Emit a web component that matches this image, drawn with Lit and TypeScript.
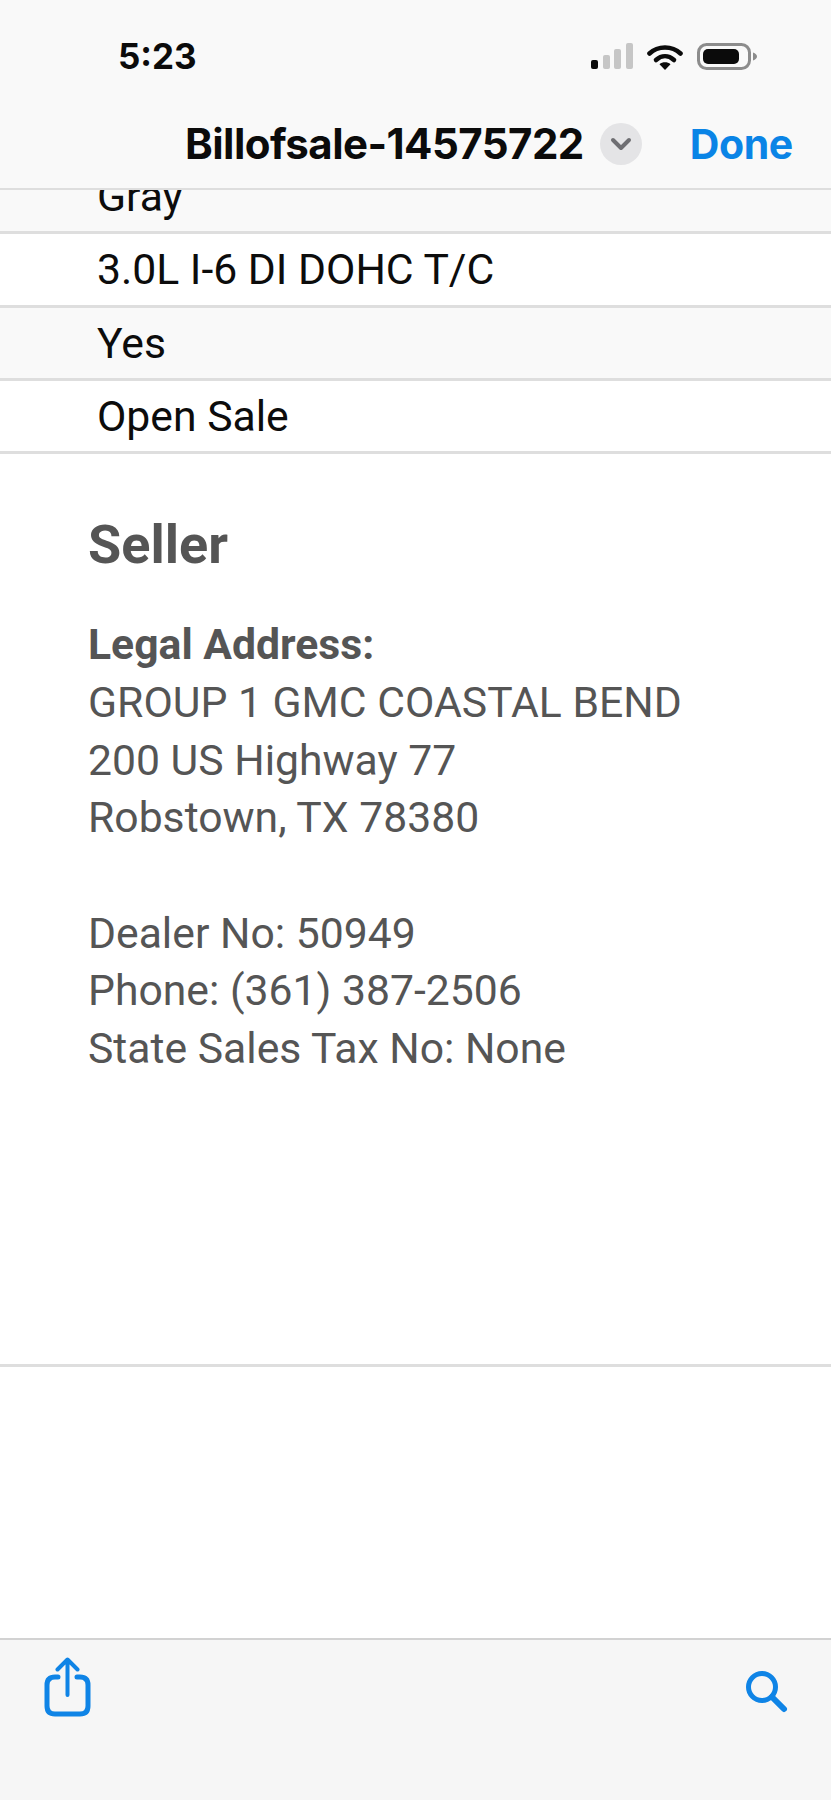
import { css, html, LitElement } from "lit";
import { customElement } from "lit/decorators.js";

const ROWS = ["Gray", "3.0L I-6 DI DOHC T/C", "Yes", "Open Sale"];

@customElement("app-root")
export class AppRoot extends LitElement {
  static styles = css`
    :host {
      display: block;
      width: 831px;
      height: 1800px;
      background: #fff;
      font-family: Roboto, "Liberation Sans", sans-serif;
    }

    .page {
      display: flex;
      flex-direction: column;
      height: 100%;
    }

    .head {
      flex: none;
      height: 190px;
      box-sizing: border-box;
      background: #f9f9f9;
      border-bottom: 2px solid #dedede;
      font-family: Inter, "Liberation Sans", sans-serif;
      font-weight: 700;
    }

    .status {
      display: flex;
      align-items: center;
      justify-content: space-between;
      height: 42px;
      padding: 35px 74px 0 118px;
    }

    .time {
      font-size: 35px;
      line-height: 42px;
      color: #0b0b0b;
    }

    .status-icons {
      display: flex;
      align-items: center;
      gap: 14px;
    }

    .nav {
      display: flex;
      align-items: center;
      height: 42px;
      margin-top: 46px;
      padding-left: 185px;
    }

    .title {
      font-size: 42px;
      line-height: 42px;
      letter-spacing: -0.55px;
      color: #0b0b0b;
      white-space: nowrap;
    }

    .chevron {
      display: flex;
      align-items: center;
      justify-content: center;
      flex: none;
      width: 42px;
      height: 42px;
      margin-left: 16px;
      border-radius: 50%;
      background: #e4e4e6;
    }

    .done {
      margin-left: 48px;
      font-size: 41px;
      line-height: 42px;
      letter-spacing: -0.4px;
      color: #0a84e6;
    }

    .content {
      flex: 1;
      overflow: hidden;
    }

    .rows {
      margin-top: -29px;
    }

    .row {
      box-sizing: border-box;
      height: 73.3px;
      padding: 7px 0 0 97px;
      border-bottom: 3px solid #dedede;
      font-size: 42.7px;
      line-height: 56px;
      color: #0c0c0c;
    }

    .row:nth-child(odd) {
      background: #f9f9f9;
    }

    .seller {
      height: 913px;
      box-sizing: border-box;
      padding: 60px 88px 0;
      border-bottom: 3px solid #dedede;
      color: #555;
      font-size: 42.7px;
      line-height: 57.7px;
    }

    h2 {
      margin: 0 0 40px;
      font-size: 54px;
      line-height: 62px;
      font-weight: 700;
    }

    .label {
      font-weight: 700;
    }

    .gap {
      height: 57.7px;
    }

    .toolbar {
      display: flex;
      flex: none;
      align-items: flex-start;
      justify-content: space-between;
      height: 162px;
      box-sizing: border-box;
      padding: 17px 42px 0 43px;
      background: #f6f6f6;
      border-top: 2px solid #d2d2d2;
    }

    .search {
      margin-top: 13px;
    }

    svg {
      display: block;
    }
  `;

  render() {
    return html`
      <div class="page">
        <header class="head">
          <div class="status">
            <span class="time">5:23</span>
            <div class="status-icons">
              <svg width="42" height="26" viewBox="0 0 42 26">
                <rect x="0" y="17" width="7" height="9" rx="2" fill="#0b0b0b" />
                <rect x="12" y="12" width="7" height="14" rx="2" fill="#c6c6c6" />
                <rect x="23" y="6" width="7" height="20" rx="2" fill="#c6c6c6" />
                <rect x="35" y="0" width="7" height="26" rx="2" fill="#c6c6c6" />
              </svg>
              <svg width="36" height="27" viewBox="0 0 36 27">
                <path d="M2.5 10.5C11 2.5 25 2.5 33.5 10.5" fill="none" stroke="#0b0b0b" stroke-width="4.6" stroke-linecap="round" />
                <path d="M9 17C14.5 12 21.5 12 27 17" fill="none" stroke="#0b0b0b" stroke-width="4.6" stroke-linecap="round" />
                <path d="M12.5 21.2C15.5 18.6 20.5 18.6 23.5 21.2L18 27Z" fill="#0b0b0b" />
              </svg>
              <svg width="60" height="27" viewBox="0 0 60 27">
                <rect x="1.5" y="1.5" width="51" height="24" rx="8" fill="none" stroke="#8c8c8c" stroke-width="3" />
                <rect x="6" y="6" width="36" height="15" rx="5" fill="#0b0b0b" />
                <path d="M56 9.5C58.5 10.3 60 11.8 60 13.5C60 15.2 58.5 16.7 56 17.5Z" fill="#8c8c8c" />
              </svg>
            </div>
          </div>
          <div class="nav">
            <span class="title">Billofsale-14575722</span>
            <span class="chevron">
              <svg width="22" height="14" viewBox="0 0 22 14">
                <path d="M3 3L11 11L19 3" fill="none" stroke="#6e6e72" stroke-width="4" stroke-linecap="round" stroke-linejoin="round" />
              </svg>
            </span>
            <span class="done">Done</span>
          </div>
        </header>

        <main class="content">
          <div class="rows">
            ${ROWS.map((r) => html`<div class="row">${r}</div>`)}
          </div>
          <section class="seller">
            <h2>Seller</h2>
            <div class="label">Legal Address:</div>
            <div>GROUP 1 GMC COASTAL BEND</div>
            <div>200 US Highway 77</div>
            <div>Robstown, TX 78380</div>
            <div class="gap"></div>
            <div>Dealer No: 50949</div>
            <div>Phone: (361) 387-2506</div>
            <div>State Sales Tax No: None</div>
          </section>
        </main>

        <footer class="toolbar">
          <svg width="50" height="60" viewBox="0 0 50 60">
            <path d="M15 20H12C6.5 20 4 22.5 4 28V49C4 54.5 6.5 57 12 57H37C42.5 57 45 54.5 45 49V28C45 22.5 42.5 20 37 20H34" fill="none" stroke="#0f84e6" stroke-width="5" stroke-linecap="round" />
            <path d="M24.5 38V3M14.5 12.5L24.5 2.5L34.5 12.5" fill="none" stroke="#0f84e6" stroke-width="4" stroke-linecap="round" stroke-linejoin="round" />
          </svg>
          <svg class="search" width="44" height="44" viewBox="0 0 44 44">
            <circle cx="17" cy="17" r="13.5" fill="none" stroke="#0f84e6" stroke-width="5" />
            <path d="M27 27L39 39" fill="none" stroke="#0f84e6" stroke-width="6" stroke-linecap="round" />
          </svg>
        </footer>
      </div>
    `;
  }
}
